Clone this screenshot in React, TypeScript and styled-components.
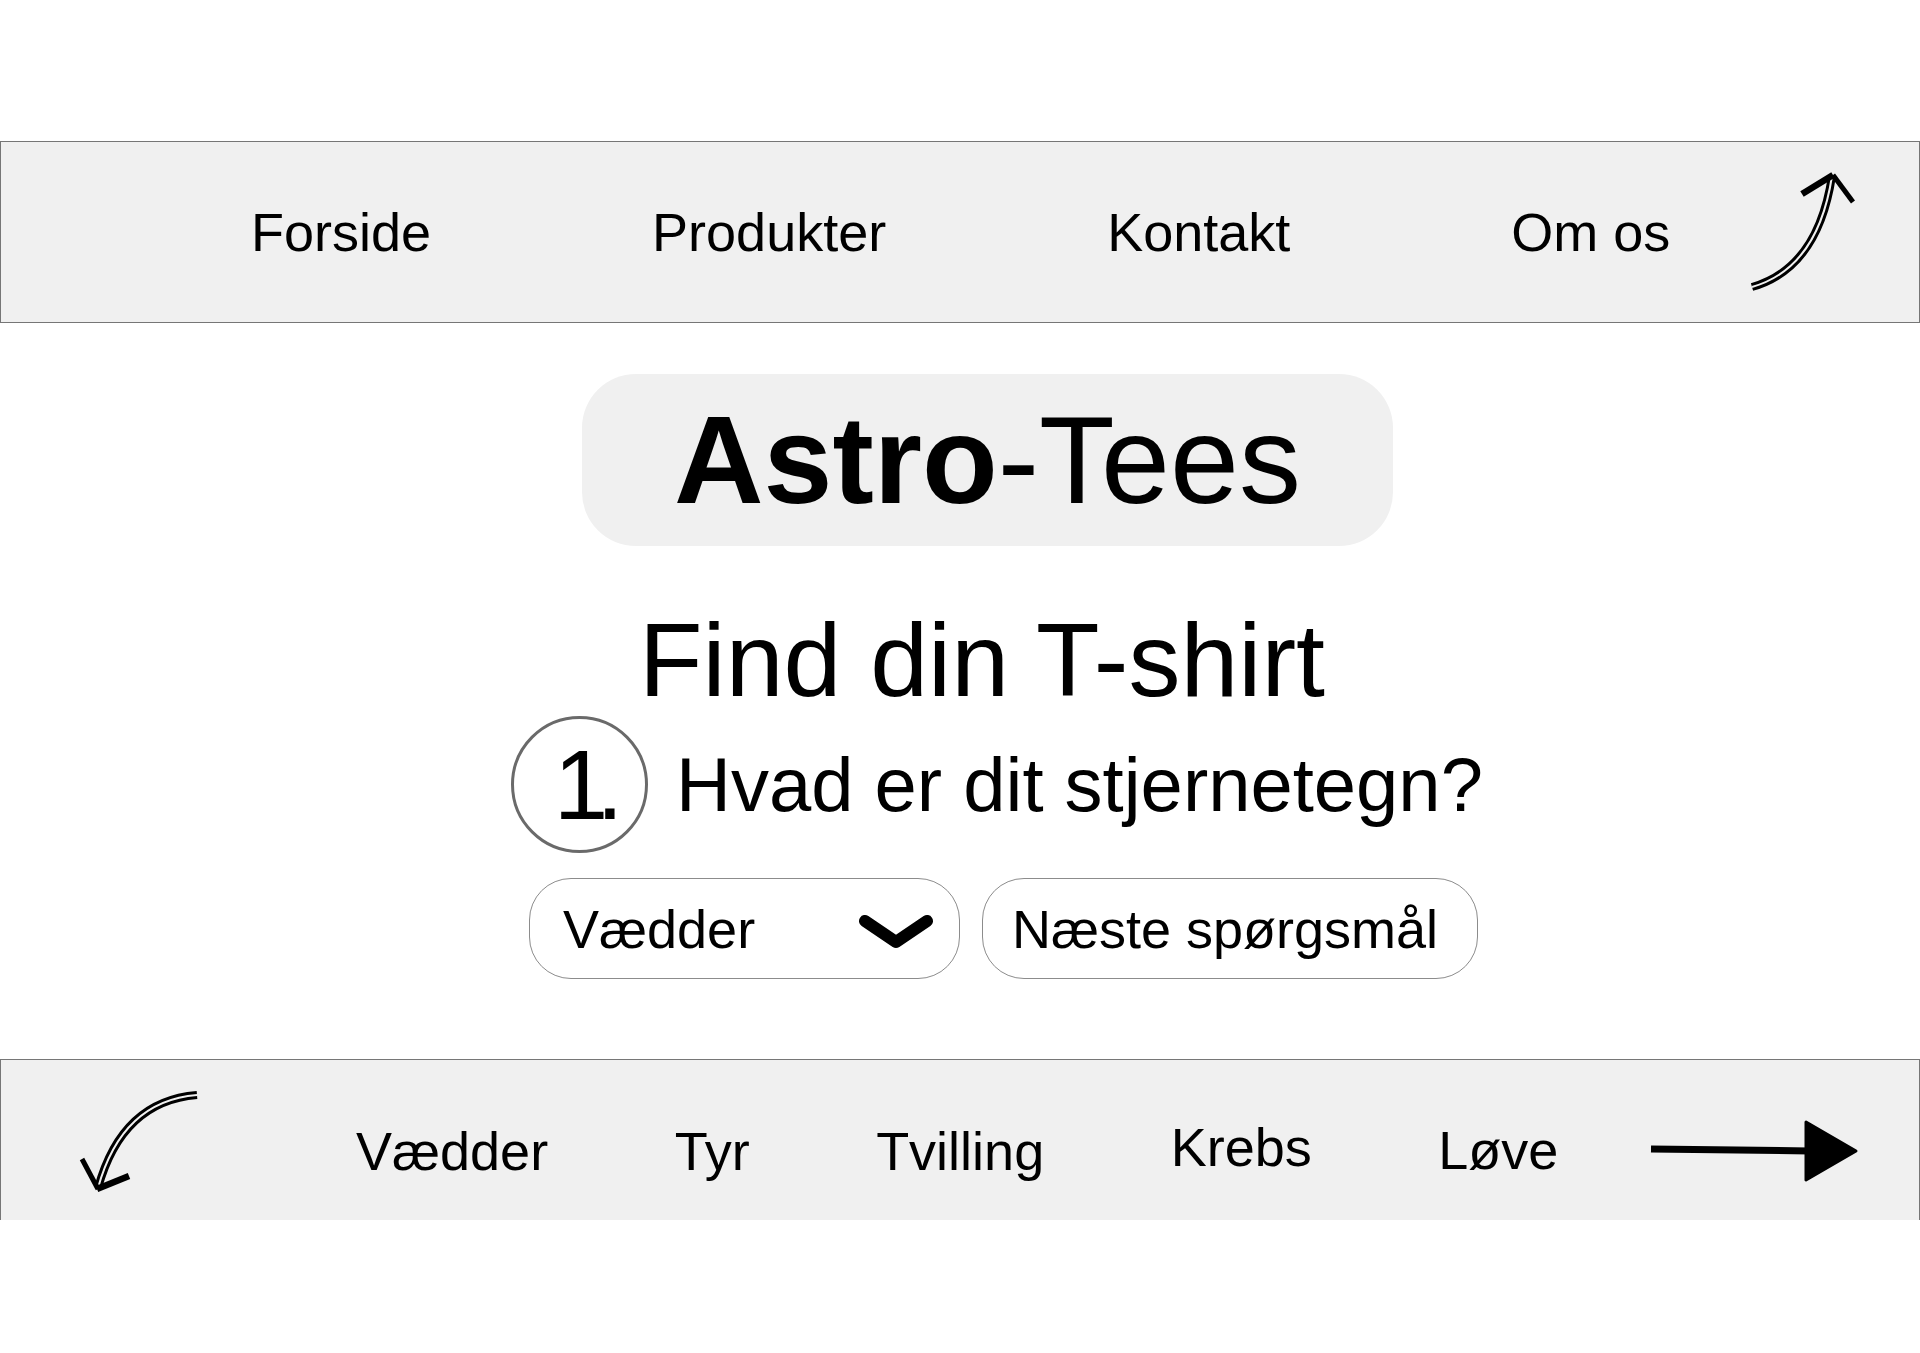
import React from "react";
import styled, { createGlobalStyle } from "styled-components";

const GlobalStyle = createGlobalStyle`
  html, body {
    margin: 0;
    padding: 0;
    background: #ffffff;
  }
  body {
    font-family: "Liberation Sans", Arial, sans-serif;
    color: #000;
  }
  #root {
    min-height: 1353px;
  }
`;

const Page = styled.div`
  width: 1920px;
  min-height: 1353px;
  padding-top: 141px;
  box-sizing: border-box;
  display: flex;
  flex-direction: column;
`;

const TopBar = styled.nav`
  box-sizing: border-box;
  height: 182px;
  width: 1920px;
  background: #f0f0f0;
  border: 1px solid #767676;
  display: flex;
  align-items: center;
  padding-left: 250px;
`;

const NavGroup = styled.div<{ $gap: number }>`
  display: flex;
  align-items: center;
  gap: ${(p) => p.$gap}px;
`;

const NavItem = styled.span`
  font-size: 54px;
  line-height: 62px;
  white-space: nowrap;
`;

const BottomItem = styled.span<{ $lift?: number }>`
  font-size: 54px;
  line-height: 62px;
  padding-top: 21px;
  white-space: nowrap;
  transform: translateY(${(p) => -(p.$lift ?? 0)}px);
`;

const ArrowSlot = styled.svg<{ $ml?: number; $mr?: number; $mt?: number }>`
  flex: none;
  display: block;
  margin-left: ${(p) => p.$ml ?? 0}px;
  margin-right: ${(p) => p.$mr ?? 0}px;
  margin-top: ${(p) => p.$mt ?? 0}px;
`;

const Main = styled.main`
  display: flex;
  flex-direction: column;
  align-items: flex-start;
`;

const LogoPill = styled.div`
  margin-top: 51px;
  margin-left: 582px;
  width: 811px;
  height: 172px;
  border-radius: 54px;
  background: #f0f0f0;
  display: flex;
  align-items: center;
  justify-content: center;
  font-size: 124px;
  line-height: 124px;
  white-space: nowrap;
`;

const LogoBold = styled.span`
  font-weight: 700;
`;

const LogoLight = styled.span`
  font-weight: 400;
`;

const Heading = styled.h1`
  margin: 62px 0 0 639px;
  font-size: 104px;
  line-height: 104px;
  font-weight: 400;
  white-space: nowrap;
`;

const QuestionRow = styled.div`
  margin: 4px 0 0 511px;
  display: flex;
  align-items: center;
  gap: 28px;
`;

const StepCircle = styled.div`
  box-sizing: border-box;
  width: 137px;
  height: 137px;
  border-radius: 50%;
  border: 3px solid #6a6a6a;
  display: flex;
  align-items: center;
  justify-content: center;
  font-size: 98px;
  line-height: 98px;
  letter-spacing: -12px;
  padding-left: 6px;
`;

const Question = styled.h2`
  margin: 0;
  font-size: 76px;
  line-height: 76px;
  font-weight: 400;
  white-space: nowrap;
`;

const ControlsRow = styled.div`
  margin: 25px 0 0 529px;
  display: flex;
  gap: 22px;
`;

const Control = styled.div<{ $w: number; $pl: number; $pr: number }>`
  box-sizing: border-box;
  width: ${(p) => p.$w}px;
  height: 101px;
  border: 1px solid #8c8c8c;
  border-radius: 42px;
  background: #ffffff;
  display: flex;
  align-items: center;
  justify-content: space-between;
  padding: 0 ${(p) => p.$pr}px 0 ${(p) => p.$pl}px;
  font-size: 54px;
  line-height: 62px;
  white-space: nowrap;
`;

const Chevron = styled.svg`
  display: block;
  flex: none;
  margin-top: 7px;
`;

const BottomBar = styled.footer`
  box-sizing: border-box;
  margin-top: 80px;
  height: 161px;
  width: 1920px;
  background: #f0f0f0;
  border: 1px solid #767676;
  border-bottom: none;
  display: flex;
  align-items: center;
  padding-left: 75px;
`;

const CurvedArrowUp = () => (
  <ArrowSlot $ml={77} width="112" height="124" viewBox="0 0 112 124">
    <path d="M5 117 Q71 98 85 6" fill="none" stroke="#000" strokeWidth="8" />
    <path d="M5 117 Q71 98 85 6" fill="none" stroke="#f0f0f0" strokeWidth="2" />
    <path d="M55 24 L86 5" fill="none" stroke="#000" strokeWidth="6.5" />
    <path d="M86 5 L106 32" fill="none" stroke="#000" strokeWidth="5" />
  </ArrowSlot>
);

const CurvedArrowDown = () => (
  <ArrowSlot $mr={152} width="128" height="106" viewBox="0 0 128 106">
    <path d="M121 8 Q46 14 22 101" fill="none" stroke="#000" strokeWidth="8" />
    <path d="M121 8 Q46 14 22 101" fill="none" stroke="#f0f0f0" strokeWidth="2" />
    <path d="M6 72 L22 102" fill="none" stroke="#000" strokeWidth="5" />
    <path d="M21 102 L53 89" fill="none" stroke="#000" strokeWidth="6.5" />
  </ArrowSlot>
);

const StraightArrow = () => (
  <ArrowSlot $ml={90} $mt={22} width="212" height="100" viewBox="0 0 212 100">
    <path d="M3 48 L162 50" fill="none" stroke="#000" strokeWidth="7" />
    <polygon
      points="158,21 208,50 158,79"
      fill="#000"
      stroke="#000"
      strokeWidth="3"
      strokeLinejoin="round"
    />
  </ArrowSlot>
);

const navLinks = ["Forside", "Produkter", "Kontakt", "Om os"];
const signs: { label: string; lift?: number }[] = [
  { label: "Vædder" },
  { label: "Tyr" },
  { label: "Tvilling" },
  { label: "Krebs", lift: 4 },
  { label: "Løve", lift: 1 },
];

export default function App() {
  return (
    <>
      <GlobalStyle />
      <Page>
        <TopBar>
          <NavGroup $gap={221}>
            {navLinks.map((l) => (
              <NavItem key={l}>{l}</NavItem>
            ))}
          </NavGroup>
          <CurvedArrowUp />
        </TopBar>

        <Main>
          <LogoPill>
            <LogoBold>Astro</LogoBold>
            <LogoLight>-Tees</LogoLight>
          </LogoPill>

          <Heading>Find din T-shirt</Heading>

          <QuestionRow>
            <StepCircle>1.</StepCircle>
            <Question>Hvad er dit stjernetegn?</Question>
          </QuestionRow>

          <ControlsRow>
            <Control $w={431} $pl={33} $pr={25}>
              <span>Vædder</span>
              <Chevron width="76" height="36" viewBox="0 0 76 36">
                <polyline
                  points="7,7 38,28 69,7"
                  fill="none"
                  stroke="#000"
                  strokeWidth="12"
                  strokeLinecap="round"
                  strokeLinejoin="round"
                />
              </Chevron>
            </Control>
            <Control $w={496} $pl={29} $pr={20}>
              <span>Næste spørgsmål</span>
            </Control>
          </ControlsRow>
        </Main>

        <BottomBar>
          <CurvedArrowDown />
          <NavGroup $gap={126.5}>
            {signs.map((s) => (
              <BottomItem key={s.label} $lift={s.lift}>
                {s.label}
              </BottomItem>
            ))}
          </NavGroup>
          <StraightArrow />
        </BottomBar>
      </Page>
    </>
  );
}
